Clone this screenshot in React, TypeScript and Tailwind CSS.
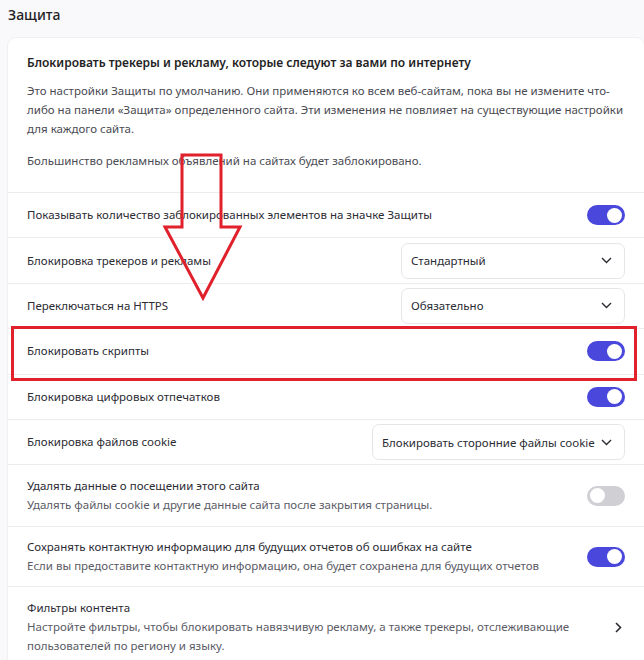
import React from "react";

const font = { fontFamily: '"Noto Sans", "Open Sans", sans-serif' };

function Toggle({ on }: { on: boolean }) {
  return (
    <div
      className={`w-[38px] h-[20px] rounded-full flex items-center px-[3px] shrink-0 ${
        on ? "bg-[#4a48dc] justify-end" : "bg-[#cfcfd4] justify-start"
      }`}
    >
      <div className="w-[15px] h-[15px] rounded-full bg-white" />
    </div>
  );
}

function Select({ value, w }: { value: string; w: string }) {
  return (
    <div
      className={`${w} h-[36px] rounded-[7px] border border-[#e6e6ea] bg-white flex items-center justify-between pl-[9px] pr-[12px] shrink-0`}
    >
      <span className="text-[11.5px] text-[#2b2b33] whitespace-nowrap">{value}</span>
      <svg width="11" height="7" viewBox="0 0 11 7" fill="none">
        <path d="M1 1l4.5 4.5L10 1" stroke="#2b2b33" strokeWidth="1.4" />
      </svg>
    </div>
  );
}

function Row({
  title,
  desc,
  right,
  h = "h-[45.4px]",
}: {
  title: string;
  desc?: React.ReactNode;
  right: React.ReactNode;
  h?: string;
}) {
  return (
    <div className={`${h} border-t border-[#ededf0] flex items-center justify-between pl-[19px] pr-[19px]`}>
      <div className="flex flex-col">
        <span className="text-[11.5px] text-[#2b2b33] leading-[18px]">{title}</span>
        {desc && <span className="text-[11.5px] text-[#5b5b66] leading-[18.5px] mt-px">{desc}</span>}
      </div>
      {right}
    </div>
  );
}

export default function App() {
  return (
    <div className="relative w-[644px] h-[660px] bg-[#f9f9fb] overflow-hidden" style={font}>
      <div className="pl-[8px] pt-[5px] h-[37px] text-[14px] font-medium text-[#1f1f25] leading-[20px]">
        Защита
      </div>
      <div className="ml-[7px] w-[638px] bg-white rounded-[9px] border border-[#f0f0f2]">
        <div className="px-[19px] pt-[16px] pb-[22px]">
          <div className="text-[12px] font-semibold text-[#1f1f25] leading-[18px]">
            Блокировать трекеры и рекламу, которые следуют за вами по интернету
          </div>
          <p className="mt-[9px] text-[11.5px] text-[#4a4a52] leading-[19px]">
            Это настройки Защиты по умолчанию. Они применяются ко всем веб-сайтам, пока вы не измените что-либо на
            панели «Защита» определенного сайта. Эти изменения не повлияет на существующие настройки для каждого
            сайта.
          </p>
          <p className="mt-[13px] text-[11.5px] text-[#4a4a52] leading-[19px]">
            Большинство рекламных объявлений на сайтах будет заблокировано.
          </p>
        </div>
        <Row title="Показывать количество заблокированных элементов на значке Защиты" right={<Toggle on />} />
        <Row title="Блокировка трекеров и рекламы" right={<Select value="Стандартный" w="w-[224px]" />} />
        <Row title="Переключаться на HTTPS" right={<Select value="Обязательно" w="w-[224px]" />} />
        <Row title="Блокировать скрипты" right={<Toggle on />} />
        <Row title="Блокировка цифровых отпечатков" right={<Toggle on />} />
        <Row
          title="Блокировка файлов cookie"
          right={<Select value="Блокировать сторонние файлы cookie" w="w-[253px]" />}
        />
        <Row
          h="h-[62px]"
          title="Удалять данные о посещении этого сайта"
          desc="Удалять файлы cookie и другие данные сайта после закрытия страницы."
          right={<Toggle on={false} />}
        />
        <Row
          h="h-[60px]"
          title="Сохранять контактную информацию для будущих отчетов об ошибках на сайте"
          desc="Если вы предоставите контактную информацию, она будет сохранена для будущих отчетов"
          right={<Toggle on />}
        />
        <div className="border-t border-[#ededf0] flex items-center justify-between pl-[19px] pr-[22px] pt-[12px] pb-[12px]">
          <div className="flex flex-col w-[560px]">
            <span className="text-[11.5px] text-[#2b2b33] leading-[18px]">Фильтры контента</span>
            <span className="text-[11.5px] text-[#5b5b66] leading-[18.5px] mt-px">
              Настройте фильтры, чтобы блокировать навязчивую рекламу, а также трекеры, отслеживающие пользователей по
              региону и языку.
            </span>
          </div>
          <svg width="7" height="11" viewBox="0 0 7 11" fill="none">
            <path d="M1 1l4.5 4.5L1 10" stroke="#2b2b33" strokeWidth="1.6" />
          </svg>
        </div>
      </div>

      {/* red highlight box */}
      <div className="absolute left-[11px] top-[326px] w-[626px] h-[55px] border-[3px] border-[#e0202b]" />
      {/* red arrow */}
      <svg className="absolute left-0 top-0" width="644" height="660" viewBox="0 0 644 660" fill="none">
        <polygon
          points="182,155 221,155 221,227 240,227 203,298 165,227 182,227"
          stroke="#e0202b"
          strokeWidth="3"
          fill="none"
          strokeLinejoin="miter"
        />
      </svg>
    </div>
  );
}
